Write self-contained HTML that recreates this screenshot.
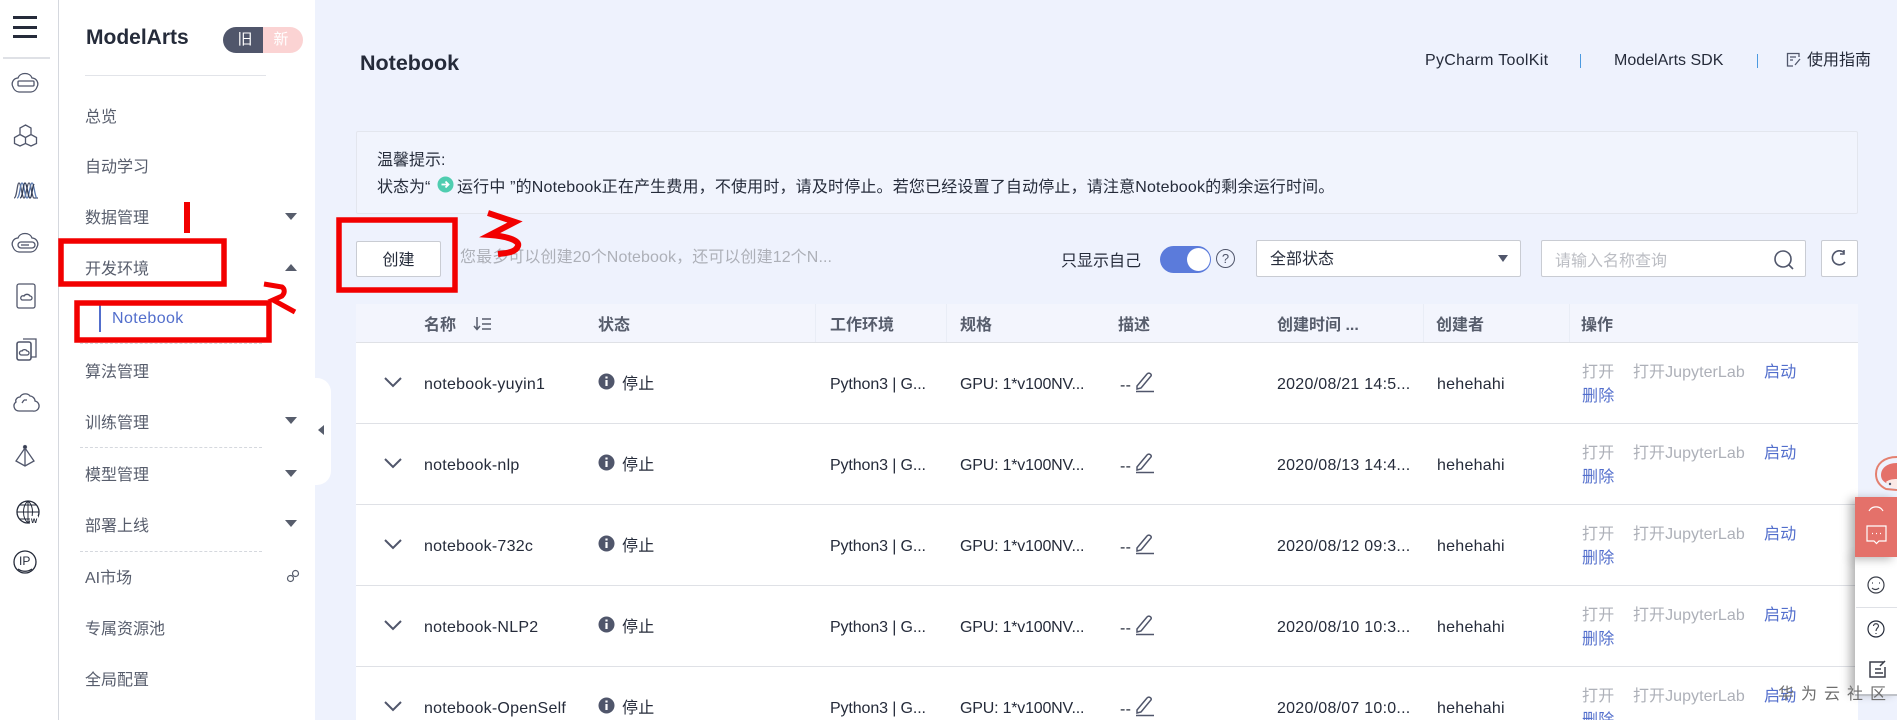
<!DOCTYPE html>
<html lang="zh">
<head>
<meta charset="utf-8">
<title>Notebook</title>
<style>
html,body{margin:0;padding:0;width:1897px;height:720px;overflow:hidden;background:#eef2fd}
body{position:relative;font-family:"Liberation Sans","Noto Sans CJK SC",sans-serif;font-size:16px;color:#252b3a}
.a,.t{position:absolute}
.t{white-space:nowrap;line-height:23px}
.m{left:85px;color:#575d6c}
.c{position:absolute;left:285px;width:0;height:0;border-left:6px solid transparent;border-right:6px solid transparent;border-top:7px solid #575d6c}
.c.u{border-top:0;border-bottom:7px solid #575d6c}
.d{position:absolute;left:80px;width:182px;border-top:1px dashed #d5d8de}
.h{top:314px;font-weight:bold;color:#575d6c}
.hd{position:absolute;top:304px;width:1px;height:38px;background:#e9edf6}
.r{position:absolute;left:356px;width:1502px;height:80px;background:#fff;border-bottom:1px solid #dfe1e6}
.r .t{top:30px;letter-spacing:.25px}
.r .e{letter-spacing:-.12px}
.r .f{letter-spacing:-.2px}
.r .j{letter-spacing:.05px}
.r .y{top:18px}
.r .z{top:42px}
.g{color:#adb0b8}.l{color:#526ecc}
svg{position:absolute;overflow:visible}
</style>
</head>
<body>
<!-- rail -->
<div class="a" style="left:0;top:0;width:58px;height:720px;background:#fff;border-right:1px solid #d5d8de"></div>
<div class="a" style="left:13px;top:16px;width:24px;height:3px;background:#252b3a"></div>
<div class="a" style="left:13px;top:26px;width:24px;height:3px;background:#252b3a"></div>
<div class="a" style="left:13px;top:35px;width:24px;height:3px;background:#252b3a"></div>
<div class="a" style="left:3px;top:57px;width:47px;height:2px;background:#dfe1e6"></div>
<svg style="left:0;top:0" width="58" height="600" fill="none" stroke="#50566b" stroke-width="1.3">
<path d="M19 92h12a7 7 0 0 0 6-5 6 6 0 0 0-5-9c-1-3-4-4.500-7-4.500s-6 1.500-7 4.500a6 6 0 0 0-5 9 7 7 0 0 0 6 5z"/><rect x="18" y="81" width="16" height="5" rx="1"/>
<path d="M25.500 125l5.500 3v6.500l-5.500 3-5.500-3V128zM20 134.500l5.500 3v6l-5.500 2.500-5.500-2.500v-6zM31 134.500l-5.500 3v6l5.500 2.500 5.500-2.500v-6z"/>
<path d="M14 198c3 0 3-15 5-15s3 15 5 15 3-15 5-15 3 15 5 15 3 0 4 0"/><path d="M17 198c3 0 3-15 5-15s3 15 5 15 3-15 5-15 3 15 5 15" stroke="#5b7bb0"/><path d="M20 198c3 0 3-15 5-15s3 15 5 15 2-11 4-14" stroke="#2f3a55"/>
<path d="M19 252h12a7 7 0 0 0 6-5 6 6 0 0 0-5-9c-1-3-4-4.500-7-4.500s-6 1.500-7 4.500a6 6 0 0 0-5 9 7 7 0 0 0 6 5z"/><rect x="18" y="242" width="17" height="6" rx="3"/><path d="M21 245h8"/>
<rect x="17" y="284" width="18" height="24" rx="2"/><path d="M22 300h8a2 2 0 0 0 0-4 3.500 3.500 0 0 0-6 0 2 2 0 0 0-2 4z"/>
<path d="M23 339h13v18h-5"/><rect x="17" y="342" width="14" height="18" rx="2" stroke-width="1.600"/><path d="M21 355h6a2 2 0 0 0 0-4 3 3 0 0 0-5 0 2 2 0 0 0-1 4z"/>
<path d="M19 411h14a5 5 0 0 0 2-10c0-3-3-5-5-5-2-3-8-3-10 1-3 0-5 3-4 5a5 5 0 0 0 3 9zM24 400l-2 3m2-3h3"/>
<path d="M25 448l-9 13 9 5 9-5zM25 448v18"/><circle cx="25" cy="447" r="1.500" fill="#252b3a"/>
<circle cx="28" cy="512" r="11" stroke="#252b3a"/><path d="M17 512h22M28 501v22M20 505h16M20 519h16M28 501c-6 5-6 17 0 22M28 501c6 5 6 17 0 22" stroke="#252b3a" stroke-width="1"/>
<circle cx="25" cy="562" r="11" stroke="#252b3a"/><path d="M18 569c4 3 10 3 14 0" stroke="#252b3a"/>
</svg>
<div class="t" style="left:30px;top:516px;font:bold 8px 'Liberation Sans';color:#252b3a;background:#fff;line-height:9px;padding:0 1px">w</div>
<div class="t" style="left:19px;top:552px;font-size:12px;color:#252b3a;line-height:18px">IP</div>

<!-- sidebar -->
<div class="a" style="left:59px;top:0;width:256px;height:720px;background:#fff"></div>
<div class="a" style="left:315px;top:378px;width:16px;height:107px;background:#fff;border-radius:0 14px 14px 0"></div>
<div class="a" style="left:318px;top:425px;width:0;height:0;border-top:5px solid transparent;border-bottom:5px solid transparent;border-right:6px solid #575d6c"></div>
<div class="t" style="left:86px;top:27px;font-size:21px;font-weight:bold;line-height:22px;color:#252b3a">ModelArts</div>
<div class="a" style="left:223px;top:27px;width:40px;height:26px;background:#50566b;border-radius:13px 0 0 13px;color:#fff;font-size:15px;line-height:26px;text-align:center;text-indent:4px">旧</div>
<div class="a" style="left:263px;top:27px;width:40px;height:26px;background:#fbd3d3;border-radius:0 13px 13px 0;color:#fff;font-size:15px;line-height:26px;text-align:center;text-indent:-4px">新</div>
<div class="a" style="left:85px;top:75px;width:181px;height:1px;background:#e2e4e9"></div>
<div class="t m" style="top:106px">总览</div>
<div class="t m" style="top:156px">自动学习</div>
<div class="t m" style="top:207px">数据管理</div>
<div class="t m" style="top:258px">开发环境</div>
<div class="t l" style="left:112px;top:307px;letter-spacing:.4px">Notebook</div>
<div class="a" style="left:99px;top:304px;width:2px;height:28px;background:#526ecc"></div>
<div class="t m" style="top:361px">算法管理</div>
<div class="t m" style="top:412px">训练管理</div>
<div class="t m" style="top:464px">模型管理</div>
<div class="t m" style="top:515px">部署上线</div>
<div class="t m" style="top:567px">AI市场</div>
<div class="t m" style="top:618px">专属资源池</div>
<div class="t m" style="top:669px">全局配置</div>
<div class="c" style="top:213px"></div><div class="c u" style="top:264px"></div><div class="c" style="top:417px"></div><div class="c" style="top:470px"></div><div class="c" style="top:520px"></div>
<div class="d" style="top:343px"></div><div class="d" style="top:447px"></div><div class="d" style="top:551px"></div>
<svg style="left:286px;top:569px" width="14" height="14" fill="none" stroke="#575d6c" stroke-width="1.200"><circle cx="4.500" cy="9.500" r="3"/><circle cx="9.500" cy="4.500" r="3"/></svg>

<!-- header -->
<div class="t" style="left:360px;top:52px;font-size:21.5px;font-weight:bold;line-height:22px">Notebook</div>
<div class="t" style="left:1425px;top:49px;letter-spacing:.3px">PyCharm ToolKit</div>
<div class="a" style="left:1580px;top:54px;width:1px;height:14px;background:#4c9ae0"></div>
<div class="t" style="left:1614px;top:49px">ModelArts SDK</div>
<div class="a" style="left:1757px;top:54px;width:1px;height:14px;background:#4c9ae0"></div>
<svg style="left:1786px;top:52px" width="16" height="16" fill="none" stroke="#50566b" stroke-width="1.300"><path d="M13 5V1.500H1.500V14H7M4 5h6M4 8h3M9 13l5-6"/></svg>
<div class="t" style="left:1807px;top:49px">使用指南</div>

<!-- notice -->
<div class="a" style="left:356px;top:131px;width:1500px;height:81px;background:#f1f4fd;border:1px solid #e3e6ee;border-radius:2px"></div>
<div class="t" style="left:377px;top:149px">温馨提示:</div>
<div class="t" style="left:377px;top:176px">状态为“</div>
<svg style="left:437px;top:176px" width="17" height="17"><circle cx="8.500" cy="8.500" r="8" fill="#4fcdb0"/><path d="M4.500 8.500h7M8.500 5.500l3 3-3 3" fill="none" stroke="#fff" stroke-width="1.800"/></svg>
<div class="t" style="left:457px;top:176px;letter-spacing:.17px">运行中 ”的Notebook正在产生费用，不使用时，请及时停止。若您已经设置了自动停止，请注意Notebook的剩余运行时间。</div>

<!-- toolbar -->
<div class="a" style="left:356px;top:241px;width:83px;height:34px;background:#fff;border:1px solid #c9ccd3;border-radius:2px;text-align:center;line-height:37px">创建</div>
<div class="t g" style="left:460px;top:246px;letter-spacing:.1px">您最多可以创建20个Notebook，还可以创建12个N...</div>
<div class="t" style="left:1061px;top:250px">只显示自己</div>
<div class="a" style="left:1160px;top:246px;width:51px;height:27px;border-radius:14px;background:#5b7bdb"></div>
<div class="a" style="left:1187px;top:248px;width:23px;height:23px;border-radius:50%;background:#fff"></div>
<div class="a" style="left:1216px;top:249px;width:17px;height:17px;border:1px solid #50566b;border-radius:50%;text-align:center;font-size:13px;line-height:17px;color:#50566b">?</div>
<div class="a" style="left:1256px;top:240px;width:263px;height:35px;background:#fff;border:1px solid #c9ccd3;border-radius:2px"></div>
<div class="t" style="left:1270px;top:248px">全部状态</div>
<div class="a" style="left:1498px;top:255px;width:0;height:0;border-left:5px solid transparent;border-right:5px solid transparent;border-top:7px solid #50566b"></div>
<div class="a" style="left:1541px;top:240px;width:263px;height:35px;background:#fff;border:1px solid #c9ccd3;border-radius:2px"></div>
<div class="t" style="left:1555px;top:250px;color:#bbbdc3">请输入名称查询</div>
<svg style="left:1773px;top:249px" width="22" height="22" fill="none" stroke="#50566b" stroke-width="1.600"><circle cx="10" cy="10" r="8"/><path d="M15.500 15.500l4.500 4.500"/></svg>
<div class="a" style="left:1821px;top:240px;width:35px;height:35px;background:#fff;border:1px solid #c9ccd3;border-radius:2px"></div>
<svg style="left:1830px;top:249px" width="18" height="18" fill="none" stroke="#50566b" stroke-width="1.600"><path d="M14 3.500A7 7 0 1 0 15 13M14 1v4h-4" /></svg>

<!-- table head -->
<div class="a" style="left:356px;top:304px;width:1502px;height:38px;background:#f3f5fd;border-bottom:1px solid #dfe1e6"></div>
<div class="t h" style="left:424px">名称</div>
<svg style="left:473px;top:316px" width="20" height="16" fill="none" stroke="#575d6c" stroke-width="1.500"><path d="M4 1v12M1 10l3 3.500L7 10M9 3h9M9 8h9M9 13h9"/></svg>
<div class="t h" style="left:598px">状态</div>
<div class="t h" style="left:830px">工作环境</div>
<div class="t h" style="left:960px">规格</div>
<div class="t h" style="left:1118px">描述</div>
<div class="t h" style="left:1277px">创建时间 ...</div>
<div class="t h" style="left:1436px">创建者</div>
<div class="t h" style="left:1581px">操作</div>
<div class="hd" style="left:815px"></div><div class="hd" style="left:946px"></div><div class="hd" style="left:1423px"></div><div class="hd" style="left:1569px"></div>

<!-- rows -->
<div class="r" style="top:343px">
<svg style="left:28px;top:34px" width="18" height="11" fill="none" stroke="#50566b" stroke-width="2"><path d="M1 1l8 8 8-8"/></svg>
<div class="t" style="left:68px">notebook-yuyin1</div>
<svg style="left:242px;top:30px" width="17" height="17"><circle cx="8.500" cy="8.500" r="8" fill="#50566b"/><path d="M8.500 7v6M8.500 3.500v2" stroke="#fff" stroke-width="2.200"/></svg>
<div class="t" style="left:266px">停止</div>
<div class="t e" style="left:474px">Python3 | G...</div>
<div class="t f" style="left:604px">GPU: 1*v100NV...</div>
<div class="t" style="left:764px;top:31px">--</div>
<svg style="left:779px;top:29px" width="20" height="20" fill="none" stroke="#50566b" stroke-width="1.500"><path d="M2 14L12 2c2-2 5 0 4 2L6 16l-4 1zM1 19.500h18"/></svg>
<div class="t" style="left:921px">2020/08/21 14:5...</div>
<div class="t" style="left:1081px">hehehahi</div>
<div class="t g y" style="left:1226px">打开</div><div class="t g j y" style="left:1277px">打开JupyterLab</div><div class="t l y" style="left:1408px">启动</div><div class="t l z" style="left:1226px">删除</div>
</div>
<div class="r" style="top:424px">
<svg style="left:28px;top:34px" width="18" height="11" fill="none" stroke="#50566b" stroke-width="2"><path d="M1 1l8 8 8-8"/></svg>
<div class="t" style="left:68px">notebook-nlp</div>
<svg style="left:242px;top:30px" width="17" height="17"><circle cx="8.500" cy="8.500" r="8" fill="#50566b"/><path d="M8.500 7v6M8.500 3.500v2" stroke="#fff" stroke-width="2.200"/></svg>
<div class="t" style="left:266px">停止</div>
<div class="t e" style="left:474px">Python3 | G...</div>
<div class="t f" style="left:604px">GPU: 1*v100NV...</div>
<div class="t" style="left:764px;top:31px">--</div>
<svg style="left:779px;top:29px" width="20" height="20" fill="none" stroke="#50566b" stroke-width="1.500"><path d="M2 14L12 2c2-2 5 0 4 2L6 16l-4 1zM1 19.500h18"/></svg>
<div class="t" style="left:921px">2020/08/13 14:4...</div>
<div class="t" style="left:1081px">hehehahi</div>
<div class="t g y" style="left:1226px">打开</div><div class="t g j y" style="left:1277px">打开JupyterLab</div><div class="t l y" style="left:1408px">启动</div><div class="t l z" style="left:1226px">删除</div>
</div>
<div class="r" style="top:505px">
<svg style="left:28px;top:34px" width="18" height="11" fill="none" stroke="#50566b" stroke-width="2"><path d="M1 1l8 8 8-8"/></svg>
<div class="t" style="left:68px">notebook-732c</div>
<svg style="left:242px;top:30px" width="17" height="17"><circle cx="8.500" cy="8.500" r="8" fill="#50566b"/><path d="M8.500 7v6M8.500 3.500v2" stroke="#fff" stroke-width="2.200"/></svg>
<div class="t" style="left:266px">停止</div>
<div class="t e" style="left:474px">Python3 | G...</div>
<div class="t f" style="left:604px">GPU: 1*v100NV...</div>
<div class="t" style="left:764px;top:31px">--</div>
<svg style="left:779px;top:29px" width="20" height="20" fill="none" stroke="#50566b" stroke-width="1.500"><path d="M2 14L12 2c2-2 5 0 4 2L6 16l-4 1zM1 19.500h18"/></svg>
<div class="t" style="left:921px">2020/08/12 09:3...</div>
<div class="t" style="left:1081px">hehehahi</div>
<div class="t g y" style="left:1226px">打开</div><div class="t g j y" style="left:1277px">打开JupyterLab</div><div class="t l y" style="left:1408px">启动</div><div class="t l z" style="left:1226px">删除</div>
</div>
<div class="r" style="top:586px">
<svg style="left:28px;top:34px" width="18" height="11" fill="none" stroke="#50566b" stroke-width="2"><path d="M1 1l8 8 8-8"/></svg>
<div class="t" style="left:68px">notebook-NLP2</div>
<svg style="left:242px;top:30px" width="17" height="17"><circle cx="8.500" cy="8.500" r="8" fill="#50566b"/><path d="M8.500 7v6M8.500 3.500v2" stroke="#fff" stroke-width="2.200"/></svg>
<div class="t" style="left:266px">停止</div>
<div class="t e" style="left:474px">Python3 | G...</div>
<div class="t f" style="left:604px">GPU: 1*v100NV...</div>
<div class="t" style="left:764px;top:31px">--</div>
<svg style="left:779px;top:29px" width="20" height="20" fill="none" stroke="#50566b" stroke-width="1.500"><path d="M2 14L12 2c2-2 5 0 4 2L6 16l-4 1zM1 19.500h18"/></svg>
<div class="t" style="left:921px">2020/08/10 10:3...</div>
<div class="t" style="left:1081px">hehehahi</div>
<div class="t g y" style="left:1226px">打开</div><div class="t g j y" style="left:1277px">打开JupyterLab</div><div class="t l y" style="left:1408px">启动</div><div class="t l z" style="left:1226px">删除</div>
</div>
<div class="r" style="top:667px">
<svg style="left:28px;top:34px" width="18" height="11" fill="none" stroke="#50566b" stroke-width="2"><path d="M1 1l8 8 8-8"/></svg>
<div class="t" style="left:68px">notebook-OpenSelf</div>
<svg style="left:242px;top:30px" width="17" height="17"><circle cx="8.500" cy="8.500" r="8" fill="#50566b"/><path d="M8.500 7v6M8.500 3.500v2" stroke="#fff" stroke-width="2.200"/></svg>
<div class="t" style="left:266px">停止</div>
<div class="t e" style="left:474px">Python3 | G...</div>
<div class="t f" style="left:604px">GPU: 1*v100NV...</div>
<div class="t" style="left:764px;top:31px">--</div>
<svg style="left:779px;top:29px" width="20" height="20" fill="none" stroke="#50566b" stroke-width="1.500"><path d="M2 14L12 2c2-2 5 0 4 2L6 16l-4 1zM1 19.500h18"/></svg>
<div class="t" style="left:921px">2020/08/07 10:0...</div>
<div class="t" style="left:1081px">hehehahi</div>
<div class="t g y" style="left:1226px">打开</div><div class="t g j y" style="left:1277px">打开JupyterLab</div><div class="t l y" style="left:1408px">启动</div><div class="t l z" style="left:1226px">删除</div>
</div>

<!-- float panel -->
<svg style="left:1874px;top:456px" width="23" height="36" fill="none" stroke="#e4806f" stroke-width="2"><path d="M23 1C10 1 2 8 2 18c0 7 4 12 10 15l11 1"/><path d="M23 7C12 7 7 13 7 19c0 6 5 10 16 10z" fill="#e4716a" stroke="none"/><path d="M12 26c2-2 6-3 11-3v9c-5 0-9-2-11-6z" fill="#fbe9e6" stroke="none"/><circle cx="16" cy="28" r="1.200" fill="#50566b" stroke="none"/></svg>
<div class="a" style="left:1855px;top:557px;width:42px;height:137px;background:#fff;box-shadow:-5px 0 9px rgba(0,0,0,.3)"></div>
<div class="a" style="left:1855px;top:497px;width:42px;height:60px;background:#e4716a;box-shadow:-5px 2px 9px rgba(0,0,0,.3)"></div>
<div class="a" style="left:1856px;top:607px;width:41px;height:1px;background:#dfe1e6"></div>
<svg style="left:1855px;top:497px" width="42" height="200" fill="none" stroke="#fff" stroke-width="1.200">
<path d="M14 14a8 8 0 0 1 14 0"/><path d="M12 29h19v15h-7l-2.500 2.500L19 44h-7zM17 36.500h1M21 36.500h1M25 36.500h1"/>
<g stroke="#3b3f4a"><circle cx="21" cy="88" r="8"/><path d="M17 86h1M24 86h1M17 91c2 2 5 2 7 0"/><circle cx="21" cy="132" r="8" stroke="#252b3a"/><path d="M21 136v1M18.500 129c0-3 5-3 5 0 0 2-2.500 2-2.500 5"/><path d="M29 165h-14v15h15v-10M20 172h6M20 176h8M25 169l5-5" stroke-width="1.500"/></g>
</svg>
<div class="a" style="left:1855px;top:694px;width:42px;height:2px;background:#bfc2c8"></div>
<div class="t" style="left:1778px;top:683px;letter-spacing:7px;color:#6e6e6e">华为云社区</div>

<!-- red annotations -->
<svg style="left:0;top:0;z-index:5" width="1897" height="720" fill="none" stroke="#f20000" stroke-width="5.500">
<rect x="61" y="241" width="163" height="43"/>
<rect x="77" y="303" width="192" height="37"/>
<rect x="339" y="220" width="116" height="70"/>
<path d="M187 202v31" stroke-width="6"/>
<path d="M264 284l18 3c3 2 3 6 0 9l-9 4 22 12" stroke-width="5"/>
<path d="M488 213l27 9-25 13c15 1 30 5 28 11-2 6-10 7-20 8" stroke-width="6"/>
</svg>
</body>
</html>
